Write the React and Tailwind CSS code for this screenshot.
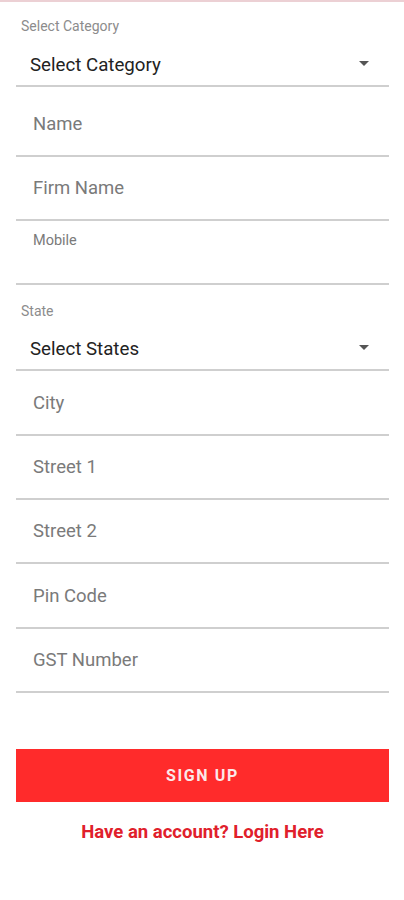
const fieldClass = 'border-b-2 border-[#cfcfcf] pl-[17px] text-[18.5px] leading-5 text-[#7a7a7a]'

function SelectField({ label, value, height, labelTop, gap }) {
  return (
    <div className={`border-b-2 border-[#cfcfcf] ${height}`}>
      <div className={`${labelTop} pl-[5px] text-[14px] leading-4 text-[#8c8c8c]`}>{label}</div>
      <div className={`${gap} flex items-center justify-between pl-[14px] pr-[20px]`}>
        <span className="text-[18.7px] leading-6 text-[#222]">{value}</span>
        <svg width="10" height="6" viewBox="0 0 10 6" className="mb-[2px]">
          <path d="M0 0h10L5 5z" fill="#555" />
        </svg>
      </div>
    </div>
  )
}

function TextField({ placeholder, className }) {
  return <div className={`${fieldClass} ${className}`}>{placeholder}</div>
}

export default function App() {
  return (
    <div className="min-h-[900px] bg-white" style={{ fontFamily: 'Roboto, "Liberation Sans", sans-serif' }}>
      <div className="h-[2px] bg-[#ecd0d4]" />
      <div className="pl-4 pr-[15px]">
        <SelectField label="Select Category" value="Select Category" height="h-[85px]" labelTop="pt-4" gap="mt-[19px]" />
        <TextField placeholder="Name" className="h-[70px] pt-[27px]" />
        <TextField placeholder="Firm Name" className="h-[64px] pt-[21px]" />
        <div className="h-[64px] border-b-2 border-[#cfcfcf] pl-[17px] pt-[12px] text-[14.5px] leading-4 text-[#7a7a7a]">Mobile</div>
        <SelectField label="State" value="Select States" height="h-[86px]" labelTop="pt-[18px]" gap="mt-[18px]" />
        <TextField placeholder="City" className="h-[65px] pt-[22px]" />
        <TextField placeholder="Street 1" className="h-[64px] pt-[21px]" />
        <TextField placeholder="Street 2" className="h-[64px] pt-[21px]" />
        <TextField placeholder="Pin Code" className="h-[65px] pt-[22px]" />
        <TextField placeholder="GST Number" className="h-[64px] pt-[21px]" />
        <button className="mt-[56px] flex h-[53px] w-full items-center justify-center bg-[#ff2b2b] text-[16px] font-bold tracking-[0.1em] text-[#fbe9e9]">
          SIGN UP
        </button>
        <div className="mt-5 text-center text-[18.5px] font-bold leading-5 text-[#e0202b]">Have an account? Login Here</div>
      </div>
    </div>
  )
}
